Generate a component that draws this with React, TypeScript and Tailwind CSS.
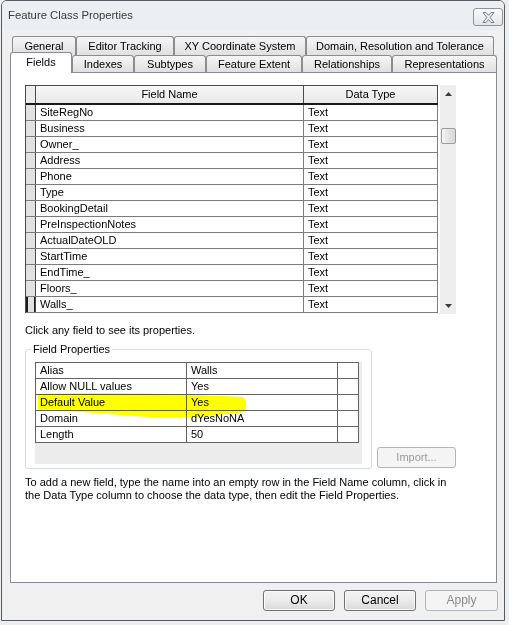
import React from "react";

const fields = [
  "SiteRegNo",
  "Business",
  "Owner_",
  "Address",
  "Phone",
  "Type",
  "BookingDetail",
  "PreInspectionNotes",
  "ActualDateOLD",
  "StartTime",
  "EndTime_",
  "Floors_",
  "Walls_",
];

const props: [string, string][] = [
  ["Alias", "Walls"],
  ["Allow NULL values", "Yes"],
  ["Default Value", "Yes"],
  ["Domain", "dYesNoNA"],
  ["Length", "50"],
];

const topTabs: [string, number][] = [
  ["General", 64],
  ["Editor Tracking", 98],
  ["XY Coordinate System", 132],
  ["Domain, Resolution and Tolerance", 188],
];

const bottomTabs: [string, number][] = [
  ["Indexes", 62],
  ["Subtypes", 72],
  ["Feature Extent", 96],
  ["Relationships", 90],
  ["Representations", 105],
];

function Tab({ label, width, tall }: { label: string; width: number; tall?: boolean }) {
  return (
    <div
      style={{ width }}
      className={
        tall
          ? "h-[19px] shrink-0 flex items-center justify-center border-t border-l border-r border-[#898c95] rounded-t-[3px] bg-linear-to-b from-[#f6f6f6] to-[#e0e0e0] whitespace-nowrap"
          : "h-[17px] shrink-0 flex items-center justify-center border-t border-l border-r border-[#898c95] rounded-t-[3px] bg-linear-to-b from-[#f6f6f6] to-[#e0e0e0] whitespace-nowrap"
      }
    >
      {label}
    </div>
  );
}

function CloseButton() {
  return (
    <div className="mt-[7px] mr-[1px] w-[30px] h-[18px] flex items-center justify-center rounded-[3px] border border-[#8d939b] bg-linear-to-b from-[#fbfbfb] to-[#e3e6ea]">
      <svg width="13" height="11" viewBox="0 0 13 11">
        <polygon
          points="1,0.5 4,0.5 6.5,3.4 9,0.5 12,0.5 8.2,5.5 12,10.5 9,10.5 6.5,7.6 4,10.5 1,10.5 4.8,5.5"
          fill="#eeeeee"
          stroke="#7a7f86"
          strokeWidth="1"
          strokeLinejoin="round"
        />
      </svg>
    </div>
  );
}

function DialogButton({ label, disabled, width }: { label: string; disabled?: boolean; width: number }) {
  return (
    <div
      style={{ width }}
      className={
        disabled
          ? "h-[21px] flex items-center justify-center rounded-[3px] border border-[#b2b6ba] bg-[#f4f4f4] text-[#8a8a8a] text-[12px]"
          : "h-[21px] flex items-center justify-center rounded-[3px] border border-[#707070] bg-linear-to-b from-[#f3f3f3] via-[#ebebeb] to-[#d9d9d9] shadow-[inset_0_0_0_1px_#fcfcfc] text-[12px]"
      }
    >
      {label}
    </div>
  );
}

function FieldsGrid() {
  return (
    <div className="flex items-start h-[229px]">
      <div className="w-[413px] h-[228px] overflow-hidden border-l border-t border-[#4a4a4a]">
        <div className="flex h-[19px] border-b-2 border-[#1a1a1a]">
          <div className="w-[10px] h-[17px] border-r border-[#4a4a4a] bg-[#ececec]" />
          <div className="w-[268px] h-[17px] border-r border-[#4a4a4a] bg-linear-to-b from-[#f7f7f7] to-[#e9e9e9] flex items-center justify-center">
            Field Name
          </div>
          <div className="w-[134px] h-[17px] border-r border-[#4a4a4a] bg-linear-to-b from-[#f7f7f7] to-[#e9e9e9] flex items-center justify-center">
            Data Type
          </div>
        </div>
        {fields.map((name, i) => (
          <div key={name} className="flex h-[16px] border-b border-[#7c7c7c]">
            <div
              className={
                i === fields.length - 1
                  ? "w-[10px] h-[15px] border-r border-[#4a4a4a] bg-[#e2e2e2] shadow-[inset_2px_0_0_#1e1e1e,inset_-1px_0_0_#1e1e1e]"
                  : "w-[10px] h-[15px] border-r border-[#4a4a4a] bg-[#e2e2e2]"
              }
            />
            <div className="w-[268px] h-[15px] border-r border-[#7c7c7c] pl-[4px] flex items-center">{name}</div>
            <div className="w-[134px] h-[15px] border-r border-[#7c7c7c] pl-[4px] flex items-center">Text</div>
          </div>
        ))}
      </div>
      <div className="ml-[2px] w-[16px] h-[229px] bg-[#eeeeee] flex flex-col items-center">
        <div className="h-[17px] w-full flex items-center justify-center">
          <svg width="7" height="4" viewBox="0 0 7 4">
            <polygon points="0,4 3.5,0 7,4" fill="#3c3c3c" />
          </svg>
        </div>
        <div className="mt-[26px] w-[15px] h-[16px] rounded-[2px] border border-[#9c9c9c] bg-linear-to-r from-[#f6f6f6] via-[#e4e4e4] to-[#d8d8d8]" />
        <div className="flex-1" />
        <div className="h-[17px] w-full flex items-center justify-center">
          <svg width="7" height="4" viewBox="0 0 7 4">
            <polygon points="0,0 7,0 3.5,4" fill="#3c3c3c" />
          </svg>
        </div>
      </div>
    </div>
  );
}

function PropertyGrid() {
  return (
    <div className="w-[327px] h-[102px] bg-[#ececec]">
      <div className="relative w-[324px] bg-white border-l border-t border-[#646464]">
        {props.map(([k, v]) => (
          <div key={k} className="flex h-[16px] border-b border-[#646464]">
            <div className="w-[151px] h-[15px] border-r border-[#646464] pl-[4px] flex items-center">{k}</div>
            <div className="w-[151px] h-[15px] border-r border-[#646464] pl-[4px] flex items-center">{v}</div>
            <div className="w-[21px] h-[15px] border-r border-[#646464]" />
          </div>
        ))}
        {/* marker stroke across the Default Value row */}
        <svg
          className="absolute left-0 top-0 pointer-events-none mix-blend-multiply"
          width="324"
          height="81"
          viewBox="0 0 324 81"
        >
          <path
            d="M2,31 C40,29 130,30 207,34 C211,37 211,46 208,49 C185,52 150,56 115,54 C80,52 40,48 2,46 Z"
            fill="#ffff00"
          />
        </svg>
      </div>
    </div>
  );
}

export default function App() {
  return (
    <div className="w-[509px] h-[625px] bg-[#eceef0] overflow-hidden font-['Liberation_Sans',Arial,sans-serif] text-[11px] leading-[13px] text-black">
      <div className="ml-[1px] w-[504px] h-[621px] border border-[#575b61] rounded-t-[6px] bg-[#f0f0f0] flex flex-col">
        <div className="h-[29px] shrink-0 flex items-start justify-between rounded-t-[5px] bg-[#eceff2]">
          <span className="mt-[7px] ml-[6px] text-[11.3px] leading-[14px] text-[#3a3a3a]">Feature Class Properties</span>
          <CloseButton />
        </div>

        <div className="mt-[6px] flex pl-[10px]">
          {topTabs.map(([label, w]) => (
            <Tab key={label} label={label} width={w} tall />
          ))}
        </div>
        <div className="mt-[-3px] flex items-end pl-[8px]">
          <div className="relative w-[62px] h-[21px] mb-[-1px] shrink-0 flex items-start justify-center pt-[3px] border-t border-l border-r border-[#898c95] rounded-t-[3px] bg-white">
            Fields
          </div>
          {bottomTabs.map(([label, w]) => (
            <Tab key={label} label={label} width={w} />
          ))}
        </div>

        <div className="ml-[8px] w-[487px] h-[511px] shrink-0 border border-[#898c95] bg-white pl-[14px] pt-[12px]">
          <FieldsGrid />
          <div className="mt-[10px]">Click any field to see its properties.</div>
          <div className="mt-[6px] flex items-end">
            <fieldset className="w-[347px] border border-[#d5dfe5] rounded-[3px] pl-[9px] pr-[9px] pt-[6px] pb-[4px]">
              <legend className="ml-[-4px] px-[2px]">Field Properties</legend>
              <PropertyGrid />
            </fieldset>
            <div className="ml-[5px] mb-[1px] w-[79px] h-[21px] flex items-center justify-center rounded-[3px] border border-[#b2b6ba] bg-[#f4f4f4] text-[#9a9a9a]">
              Import...
            </div>
          </div>
          <div className="mt-[7px] whitespace-nowrap">
            To add a new field, type the name into an empty row in the Field Name column, click in
            <br />
            the Data Type column to choose the data type, then edit the Field Properties.
          </div>
        </div>

        <div className="mt-[7px] flex justify-end gap-[9px] pr-[6px]">
          <DialogButton label="OK" width={72} />
          <DialogButton label="Cancel" width={72} />
          <DialogButton label="Apply" width={73} disabled />
        </div>
      </div>
    </div>
  );
}
